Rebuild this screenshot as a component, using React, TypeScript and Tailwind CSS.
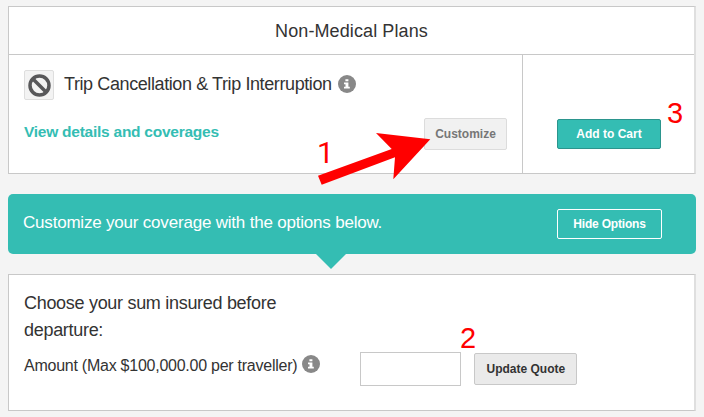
import type { ReactNode } from "react";
import clsx from "clsx";

function InfoIcon({ className }: { className?: string }) {
  return (
    <svg viewBox="0 0 18 18" className={clsx("h-[18px] w-[18px] shrink-0", className)}>
      <circle cx="9" cy="9" r="9" fill="#888" />
      <path d="M7.4 4.2h3v2h-3zM6 7.5h4.4v4.2h1.4v1.7H6v-1.7h1.5V9.200H6z" fill="#fff" />
    </svg>
  );
}

function BanIcon() {
  return (
    <svg viewBox="0 0 23 23" className="h-[23px] w-[23px]" fill="none" stroke="#58585a" strokeWidth="3.5">
      <circle cx="11.5" cy="11.5" r="9.500" />
      <path d="M5 5l13 13" />
    </svg>
  );
}

function Button({ className, children }: { className?: string; children: ReactNode }) {
  return (
    <button className={clsx("flex shrink-0 items-center justify-center rounded-[2px] border font-bold whitespace-nowrap", className)}>
      {children}
    </button>
  );
}

function Step({ className, children }: { className?: string; children: ReactNode }) {
  return <span className={clsx("absolute leading-[30px] text-[#ff0000]", className)}>{children}</span>;
}

export default function App() {
  return (
    <div className="relative h-[417px] w-[704px] overflow-hidden bg-[#f4f4f4] pt-1.5 pl-2 font-['Liberation_Sans',Arial,sans-serif] text-[#333]">
      <section className="flex h-[168px] w-[688px] flex-col border border-r-2 border-[#c8c8c8] border-r-[#dfdfdf] bg-white">
        <h2 className="h-[48px] border-b border-[#c8c8c8] text-center text-[18px] leading-[48px] tracking-[0.1px]">
          Non-Medical Plans
        </h2>
        <div className="flex flex-1">
          <div className="w-[514px] border-r border-[#c8c8c8] pt-[15px] pr-[15px] pl-[15px]">
            <div className="flex">
              <div className="flex h-[30px] w-[30px] items-center justify-center rounded-[2px] border border-[#dedede] bg-[#f3f3f3]">
                <BanIcon />
              </div>
              <span className="ml-[10px] text-[18px] leading-[28px] tracking-[-0.4px] whitespace-nowrap">
                Trip Cancellation &amp; Trip Interruption
              </span>
              <InfoIcon className="mt-[5px] ml-[6px]" />
            </div>
            <div className="mt-[18px] flex justify-between">
              <a className="text-[15.5px] leading-[28px] font-bold tracking-[-0.25px] text-[#34bdb3]">View details and coverages</a>
              <Button className="h-8 w-[83px] border-[#dcdcdc] bg-[#f1f1f1] text-[12px] text-[#777]">Customize</Button>
            </div>
          </div>
          <div className="flex-1 pt-16 pl-[34px]">
            <Button className="h-[30px] w-[104px] border-[#2b958d] bg-[#34bdb3] text-[12px] text-white">Add to Cart</Button>
          </div>
        </div>
      </section>

      <section className="relative mt-5 flex h-[60px] w-[688px] items-center justify-between rounded-[5px] bg-[#34bdb3] pr-[34px] pl-[15px] text-white">
        <p className="pb-0.5 text-[17px] tracking-[-0.2px]">Customize your coverage with the options below.</p>
        <Button className="h-[30px] w-[105px] border-white text-[12px] tracking-[-0.2px]">Hide Options</Button>
        <svg viewBox="0 0 30 15" className="absolute top-full left-[308px] h-[15px] w-[30px]">
          <path d="M0 0h30L15 15z" fill="#34bdb3" />
        </svg>
      </section>

      <section className="mt-5 h-[137px] w-[688px] border border-r-2 border-[#c8c8c8] border-r-[#dfdfdf] bg-white pt-[15px] pl-[15px]">
        <p className="w-[280px] text-[18px] leading-[27px] tracking-[-0.3px]">Choose your sum insured before departure:</p>
        <div className="mt-[8px] flex">
          <label htmlFor="amount" className="text-[16px] leading-[28px] tracking-[-0.25px] whitespace-nowrap">
            Amount (Max $100,000.00 per traveller)
          </label>
          <InfoIcon className="mt-[3px] ml-[5px]" />
          <input id="amount" className="ml-[40px] h-[34px] w-[101px] border border-[#c8c8c8] bg-white" />
          <Button className="mt-px ml-[13px] h-8 w-[103px] border-[#c8c8c8] bg-[#eaeaea] text-[12px] text-[#333]">Update Quote</Button>
        </div>
      </section>

      {/* walkthrough markers */}
      <Step className="top-[138px] left-[317px] font-[Roboto,sans-serif] text-[30px]">1</Step>
      <Step className="top-[323px] left-[460px] text-[29px]">2</Step>
      <Step className="top-[98px] left-[667px] text-[29px]">3</Step>
      <svg viewBox="0 0 113 53" className="absolute top-[132px] left-[318px] h-[53px] w-[113px]">
        <path d="M0 43.700L73.700 17 58 1l54.300 6.300-37 40L77 25.300 3.700 52.700z" fill="#f00" />
      </svg>
    </div>
  );
}
